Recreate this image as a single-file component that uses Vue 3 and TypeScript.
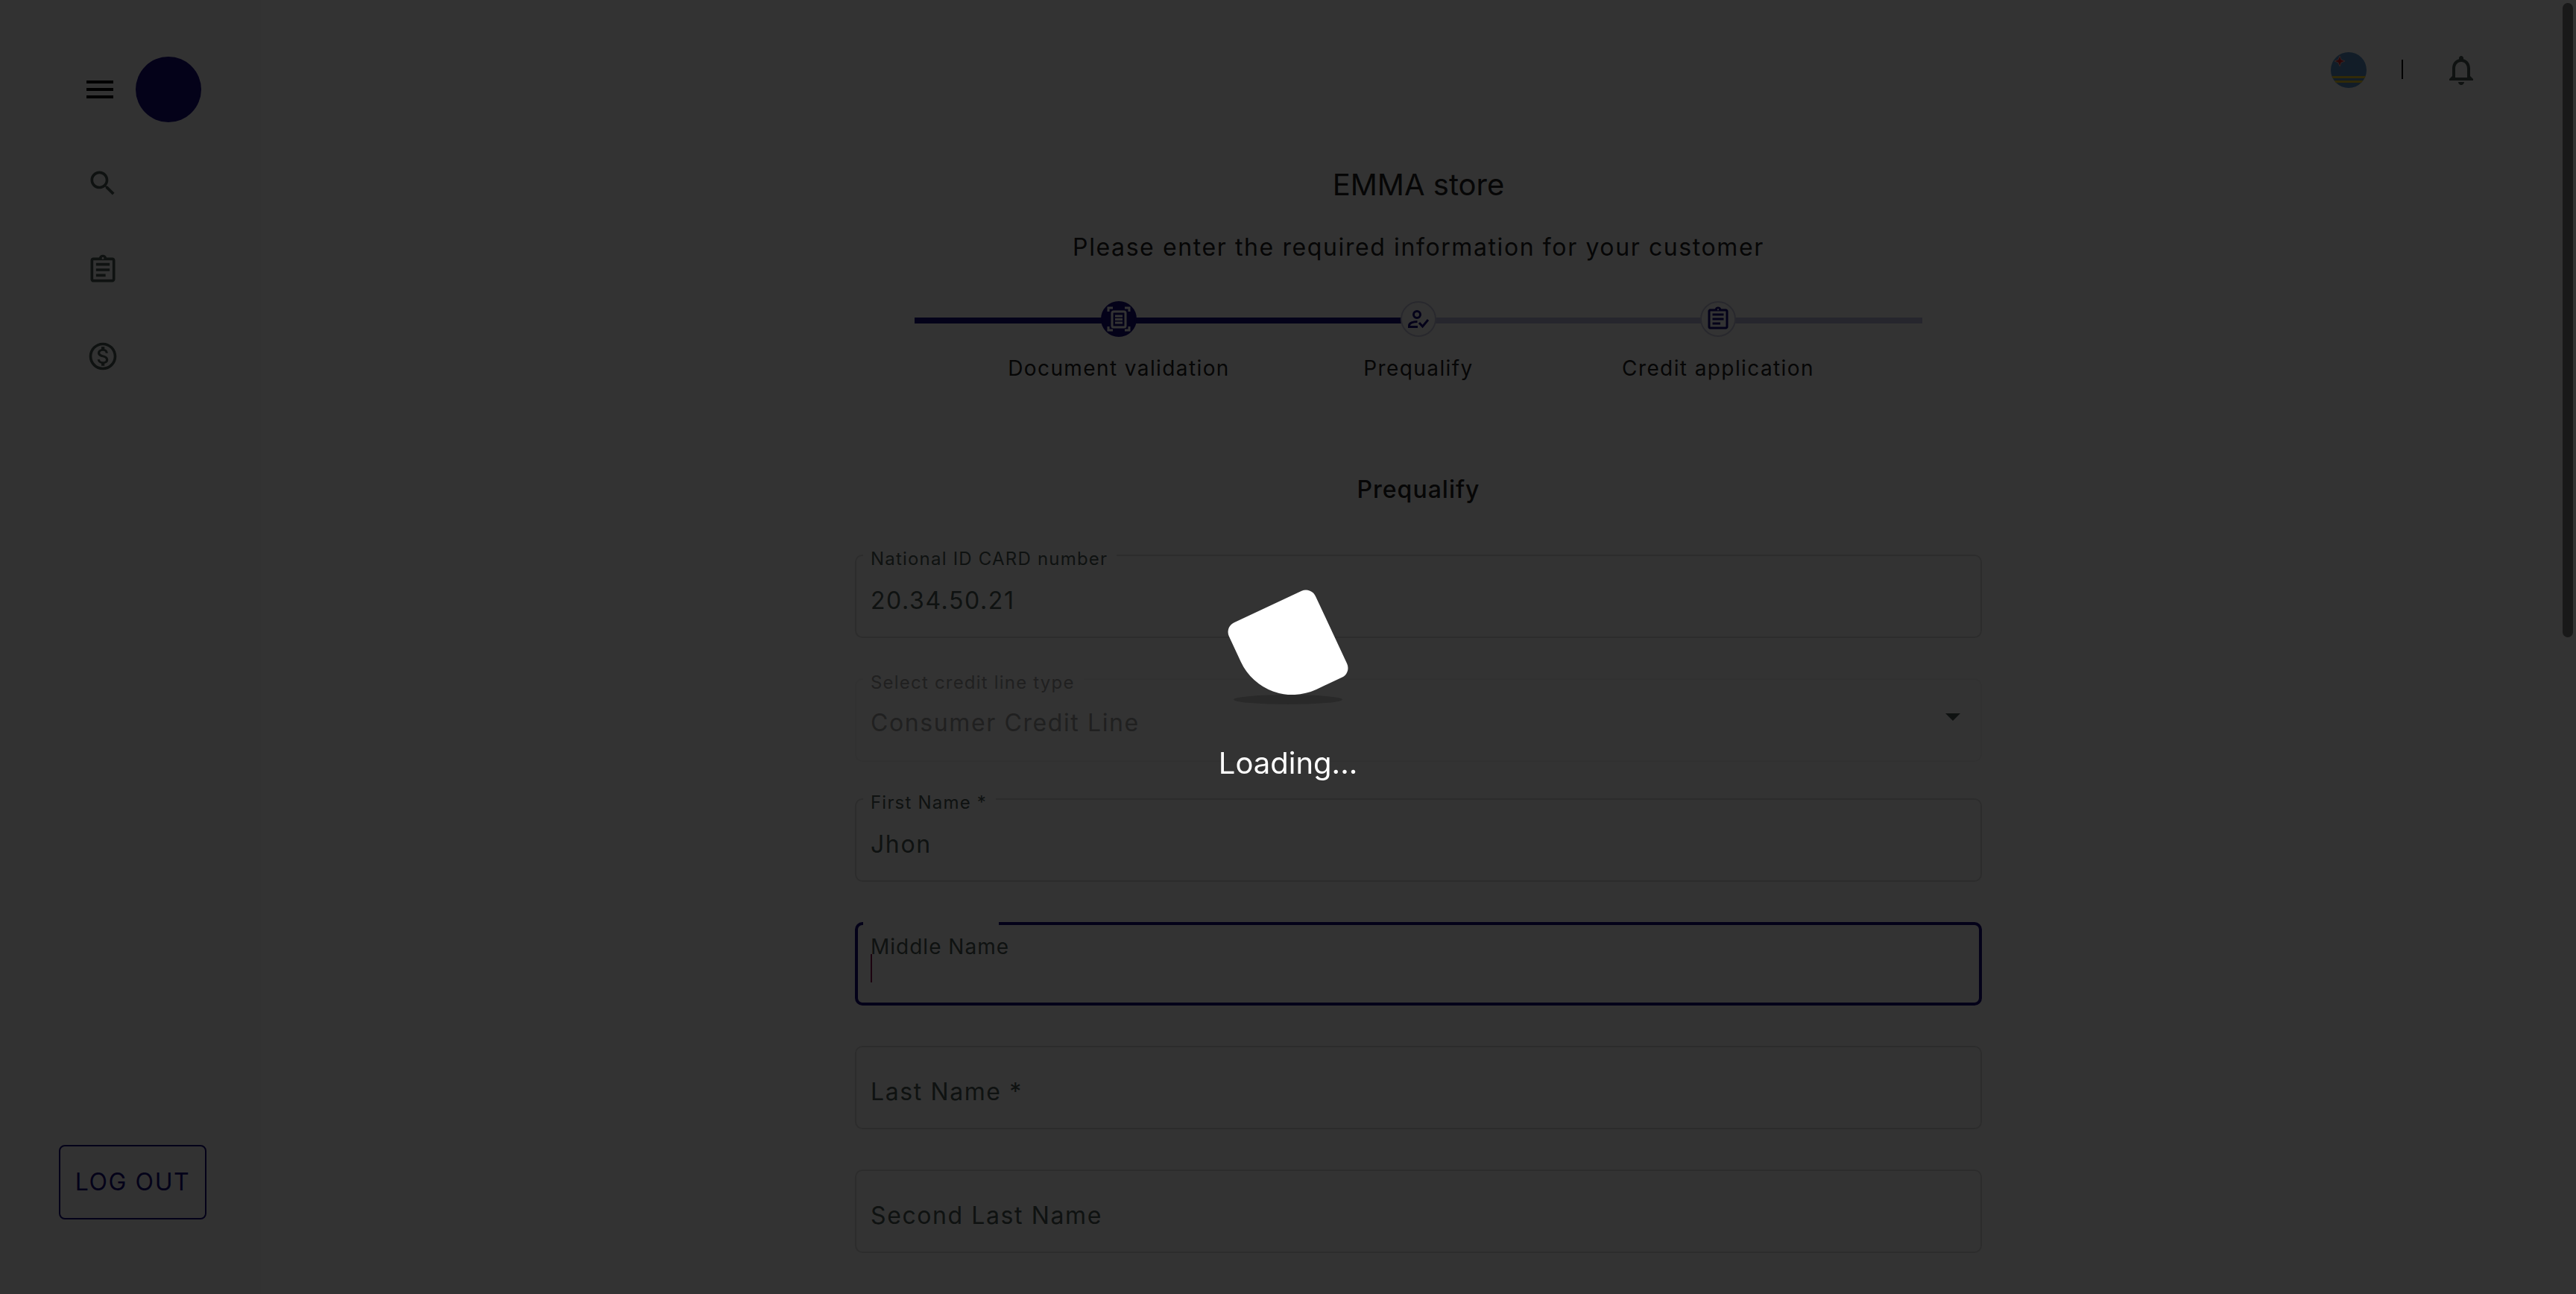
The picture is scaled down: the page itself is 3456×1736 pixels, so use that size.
<script setup lang="ts">
import { ref } from 'vue'

interface Step {
  label: string
  icon: 'scan' | 'person' | 'clipboard'
  done: boolean
}

const steps: Step[] = [
  { label: 'Document validation', icon: 'scan', done: true },
  { label: 'Prequalify', icon: 'person', done: false },
  { label: 'Credit application', icon: 'clipboard', done: false },
]

const nationalId = ref('20.34.50.21')
const creditLine = ref('Consumer Credit Line')
const firstName = ref('Jhon')
const middleName = ref('')
const lastName = ref('')
const secondLastName = ref('')

const clipboardPath =
  'M7 15h7v2H7zm0-4h10v2H7zm0-4h10v2H7zm12-4h-4.18C14.4 1.84 13.3 1 12 1c-1.3 0-2.4.84-2.82 2H5c-.14 0-.27.01-.4.04-.39.08-.74.28-1.01.55-.18.18-.33.4-.43.64-.1.23-.16.49-.16.77v14c0 .27.06.54.16.78s.25.45.43.64c.27.27.62.47 1.01.55.13.02.26.03.4.03h14c1.1 0 2-.9 2-2V5c0-1.1-.9-2-2-2zm-7-.25c.41 0 .75.34.75.75s-.34.75-.75.75-.75-.34-.75-.75.34-.75.75-.75zM19 19H5V5h14v14z'
</script>

<template>
  <div class="page">
    <aside class="sidebar">
      <div class="brand">
        <button class="icon-button menu" type="button" aria-label="Menu">
          <svg viewBox="0 0 24 24"><path d="M3 18h18v-2H3v2zm0-5h18v-2H3v2zm0-7v2h18V6H3z" /></svg>
        </button>
        <span class="logo"></span>
      </div>
      <nav class="nav">
        <a href="#search" aria-label="Search">
          <svg viewBox="0 0 24 24">
            <path d="M15.5 14h-.79l-.28-.27C15.41 12.59 16 11.11 16 9.5 16 5.91 13.09 3 9.5 3S3 5.91 3 9.5 5.91 16 9.5 16c1.61 0 3.09-.59 4.23-1.57l.27.28v.79l5 4.99L20.49 19l-4.99-5zm-6 0C7.01 14 5 11.99 5 9.5S7.01 5 9.5 5 14 7.01 14 9.5 11.99 14 9.5 14z" />
          </svg>
        </a>
        <a href="#applications" aria-label="Applications">
          <svg viewBox="0 0 24 24"><path :d="clipboardPath" /></svg>
        </a>
        <a href="#payments" aria-label="Payments">
          <svg viewBox="0 0 24 24">
            <path d="M12 2C6.48 2 2 6.48 2 12s4.48 10 10 10 10-4.48 10-10S17.52 2 12 2zm0 18c-4.41 0-8-3.59-8-8s3.59-8 8-8 8 3.59 8 8-3.59 8-8 8zm.31-8.86c-1.77-.45-2.34-.94-2.34-1.67 0-.84.79-1.43 2.1-1.43 1.38 0 1.9.66 1.94 1.64h1.71c-.05-1.34-.87-2.57-2.49-2.97V5H10.9v1.69c-1.51.32-2.72 1.3-2.72 2.81 0 1.79 1.49 2.69 3.66 3.21 1.95.46 2.34 1.15 2.34 1.87 0 .53-.39 1.39-2.1 1.39-1.6 0-2.23-.72-2.32-1.64H8.04c.1 1.7 1.36 2.66 2.86 2.97V19h2.34v-1.67c1.52-.29 2.72-1.16 2.73-2.77-.01-2.2-1.9-2.96-3.66-3.42z" />
          </svg>
        </a>
      </nav>
      <button class="logout" type="button">LOG OUT</button>
    </aside>

    <main class="main">
      <header class="topbar">
        <svg class="flag" viewBox="0 0 48 48" role="img" aria-label="Aruba">
          <clipPath id="flag-clip"><circle cx="24" cy="24" r="24" /></clipPath>
          <g clip-path="url(#flag-clip)">
            <rect width="48" height="48" fill="#5b92c8" />
            <rect y="32" width="48" height="3" fill="#f3d32c" />
            <rect y="38" width="48" height="3" fill="#f3d32c" />
            <path d="M12 5l2 5 5 2-5 2-2 5-2-5-5-2 5-2z" fill="#e0292f" stroke="#e9b5b8" stroke-width="1" />
          </g>
        </svg>
        <span class="divider"></span>
        <button class="icon-button bell" type="button" aria-label="Notifications">
          <svg viewBox="0 0 24 24">
            <path d="M12 22c1.1 0 2-.9 2-2h-4c0 1.1.9 2 2 2zm6-6v-5c0-3.07-1.63-5.64-4.5-6.32V4c0-.83-.67-1.5-1.5-1.5s-1.5.67-1.5 1.5v.68C7.64 5.36 6 7.92 6 11v5l-2 2v1h16v-1l-2-2zm-2 1H8v-6c0-2.48 1.51-4.5 4-4.5s4 2.02 4 4.5v6z" />
          </svg>
        </button>
      </header>

      <h1 class="title">EMMA store</h1>
      <p class="subtitle">Please enter the required information for your customer</p>

      <ol class="stepper">
        <li v-for="step in steps" :key="step.label" class="step">
          <span class="dot" :class="{ done: step.done }">
            <svg v-if="step.icon === 'scan'" viewBox="0 0 36 36" fill="none" stroke="currentColor">
              <path d="M4 8V3h6M26 3h6v5M32 28v5h-6M10 33H4v-5" stroke-width="3" />
              <rect x="9" y="8" width="18" height="21" rx="2" stroke-width="3" />
              <path d="M13 14h10M13 18.500h10M13 23h10" stroke-width="3" />
            </svg>
            <svg v-else-if="step.icon === 'person'" viewBox="0 0 36 36" fill="none" stroke="currentColor" stroke-width="3">
              <circle cx="16" cy="12" r="4.500" />
              <path d="M17 28.500H5.500V27c0-3.500 5-5.500 11-5.500" />
              <path d="M19 23l4.500 5L31 19" />
            </svg>
            <svg v-else viewBox="0 0 24 24" fill="currentColor"><path :d="clipboardPath" /></svg>
          </span>
          <span class="step-label">{{ step.label }}</span>
        </li>
      </ol>

      <h2 class="section">Prequalify</h2>

      <form class="form" @submit.prevent>
        <div class="field floated">
          <label for="national-id">National ID CARD number</label>
          <input id="national-id" v-model="nationalId" type="text" />
        </div>
        <div class="field floated disabled">
          <label for="credit-line">Select credit line type</label>
          <select id="credit-line" v-model="creditLine" disabled>
            <option>Consumer Credit Line</option>
          </select>
          <svg class="arrow" viewBox="0 0 20 10"><path d="M0 0h20L10 10z" /></svg>
        </div>
        <div class="field floated">
          <label for="first-name">First Name *</label>
          <input id="first-name" v-model="firstName" type="text" />
        </div>
        <div class="field focused">
          <label for="middle-name">Middle Name</label>
          <input id="middle-name" v-model="middleName" type="text" />
          <span class="caret"></span>
        </div>
        <div class="field">
          <label for="last-name">Last Name *</label>
          <input id="last-name" v-model="lastName" type="text" />
        </div>
        <div class="field">
          <label for="second-last-name">Second Last Name</label>
          <input id="second-last-name" v-model="secondLastName" type="text" />
        </div>
      </form>
    </main>

    <div class="overlay" role="status">
      <div class="loader"></div>
      <p class="loading">Loading...</p>
    </div>
    <span class="scroll-thumb"></span>
  </div>
</template>

<style>
body {
  margin: 0;
  background: #ffffff;
}
</style>

<style scoped>
.page {
  --navy: #140a7d;
  --ink: #4b5a55;
  --paper: #ffffff;
  position: relative;
  display: grid;
  grid-template-columns: 350px 1fr;
  height: 100vh;
  overflow: hidden;
  background: var(--paper);
  color: #212121;
  font-family: Inter, "Liberation Sans", sans-serif;
  font-size: 32px;
  line-height: 40px;
}

.page * {
  box-sizing: border-box;
}

svg {
  display: block;
}

.icon-button {
  padding: 0;
  border: 0;
  background: none;
}

.icon-button svg {
  width: 48px;
  height: 48px;
}

.sidebar {
  display: flex;
  flex-direction: column;
  align-items: flex-start;
  padding: 76px 0 100px;
  background: #fbfbfb;
}

.brand {
  display: flex;
  align-items: center;
  gap: 24px;
  padding-left: 110px;
}

.menu {
  fill: #000000;
}

.logo {
  width: 88px;
  height: 88px;
  border-radius: 50%;
  background: var(--navy);
}

.nav {
  display: flex;
  flex-direction: column;
  gap: 72px;
  padding: 60px 0 0 116px;
  fill: var(--ink);
}

.nav svg {
  width: 44px;
  height: 44px;
}

.logout {
  width: 198px;
  height: 100px;
  margin: auto 0 0 79px;
  padding: 0;
  border: 2px solid var(--navy);
  border-radius: 8px;
  background: none;
  color: var(--navy);
  font: inherit;
  letter-spacing: 0.05em;
}

.main {
  display: flex;
  flex-direction: column;
  align-items: center;
  min-width: 0;
  overflow: hidden;
}

.topbar {
  display: flex;
  align-items: center;
  align-self: stretch;
  justify-content: flex-end;
  flex: none;
  height: 118px;
  padding: 70px 130px 0 0;
}

.flag {
  width: 48px;
  height: 48px;
}

.divider {
  width: 2px;
  height: 26px;
  margin: 0 54px 2px 47px;
  background: #000000;
}

.bell {
  fill: var(--ink);
}

.title {
  margin: 106px 0 0;
  font-size: 40px;
  font-weight: 400;
  line-height: 48px;
}

.subtitle {
  margin: 40px 0 0;
  letter-spacing: 0.05em;
}

.stepper {
  position: relative;
  display: grid;
  grid-template-columns: repeat(3, 1fr);
  flex: none;
  width: 1352px;
  max-width: 100%;
  margin: 52px 0 0;
  padding: 0 73px;
  list-style: none;
  background: linear-gradient(90deg, var(--navy) 50%, #bcbce0 50%) 0 22px / 100% 8px no-repeat;
}

.step {
  display: flex;
  flex-direction: column;
  align-items: center;
  gap: 22px;
}

.dot {
  display: grid;
  place-items: center;
  width: 48px;
  height: 48px;
  border: 2px solid #c8c8e0;
  border-radius: 50%;
  background: var(--paper);
  color: var(--navy);
}

.dot svg {
  width: 36px;
  height: 36px;
}

.dot.done {
  border-color: var(--navy);
  background: var(--navy);
  color: var(--paper);
}

.step-label {
  font-size: 28px;
  letter-spacing: 0.05em;
}

.section {
  margin: 123px 0 0;
  font-size: 32px;
  font-weight: 500;
  letter-spacing: 1px;
}

.form {
  display: flex;
  flex-direction: column;
  gap: 54px;
  width: 1512px;
  max-width: 100%;
  margin-top: 67px;
}

.field {
  position: relative;
  flex: none;
  height: 112px;
  border: 2px solid #dcdcdc;
  border-radius: 10px;
  color: var(--ink);
  letter-spacing: 0.05em;
}

.field label {
  position: absolute;
  top: 40px;
  left: 19px;
}

.field input,
.field select {
  display: block;
  width: 100%;
  height: 100%;
  padding: 11px 19px 0;
  border: 0;
  outline: 0;
  appearance: none;
  background: none;
  color: inherit;
  font: inherit;
  letter-spacing: inherit;
  opacity: 1;
}

.field.floated label {
  top: -12px;
  left: 9px;
  padding: 0 12px 0 10px;
  background: var(--paper);
  font-size: 24px;
  line-height: 32px;
  letter-spacing: 0.05em;
}

.field.disabled {
  margin-bottom: -5px;
  border-color: #f2f2f2;
  color: #a0a0a0;
}

.field.disabled select {
  padding: 8px 19px 0;
}

.arrow {
  position: absolute;
  top: 45px;
  right: 27px;
  width: 20px;
  height: 10px;
  fill: var(--ink);
}

.field.focused {
  border: 4px solid var(--navy);
}

.field.focused::before {
  content: "";
  position: absolute;
  top: -4px;
  left: 7px;
  width: 182px;
  height: 4px;
  background: var(--paper);
}

.field.focused label {
  top: 9px;
  left: 17px;
  font-size: 28px;
  letter-spacing: 1px;
}

.caret {
  position: absolute;
  top: 39px;
  left: 17px;
  width: 2px;
  height: 38px;
  background: #8c1450;
}

.overlay {
  position: fixed;
  inset: 0;
  display: flex;
  flex-direction: column;
  align-items: center;
  gap: 64px;
  padding-top: calc(50vh - 60px);
  background: rgba(0, 0, 0, 0.8);
  color: #ffffff;
}

.loader {
  position: relative;
  width: 128px;
  height: 128px;
}

.loader::before {
  content: "";
  position: absolute;
  bottom: -9px;
  left: -9px;
  width: 146px;
  height: 13px;
  border-radius: 50%;
  background: rgba(0, 0, 0, 0.2);
}

.loader::after {
  content: "";
  position: absolute;
  inset: 0;
  border-radius: 14px 14px 14px 76px;
  background: #ffffff;
  transform: rotate(-25deg);
}

.loading {
  margin: 0;
  font-size: 40px;
  line-height: 48px;
}

.scroll-thumb {
  position: fixed;
  top: 4px;
  right: 4px;
  width: 14px;
  height: 49vh;
  border-radius: 7px;
  background: #191919;
}
</style>
